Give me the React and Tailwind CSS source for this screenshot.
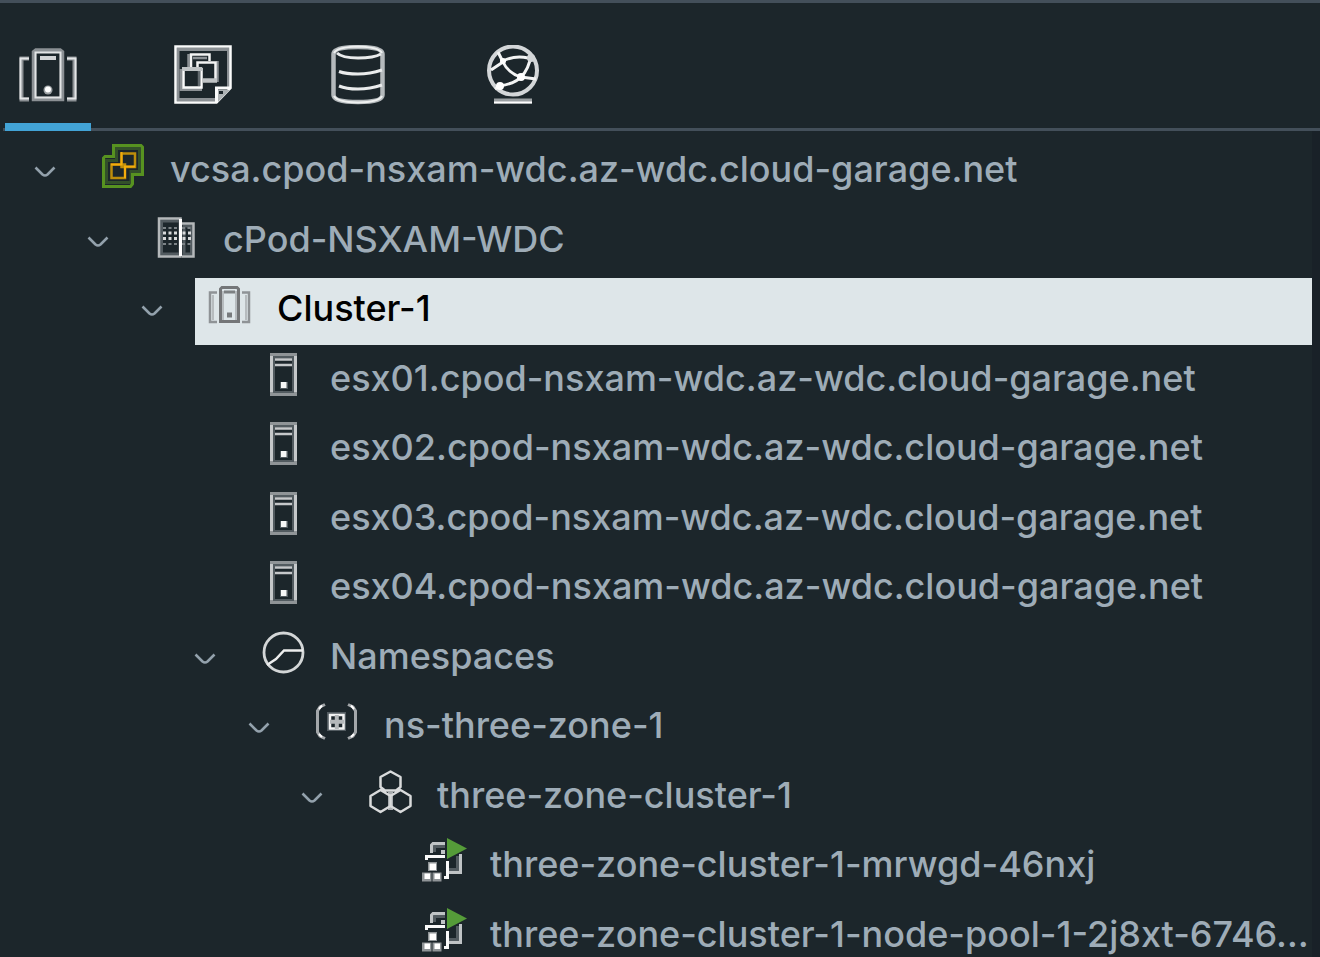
import React from 'react';

function ClusterTabIcon() {
  return (
    <svg className="size-[60px]" viewBox="0 0 60 60" fill="none" aria-hidden="true">
      <g stroke="#8b9094">
        <path d="M11 13.5H3.5V54.5H11M49 13.5H56.500V54.500H49" strokeWidth="4" />
        <path d="M16 7V54H44V7L42 5.500H18z" strokeWidth="4.500" />
      </g>
      <path d="M11 13.500H2.500V53.500H11M49 13.500H57.500V53.500H49" stroke="#e4e6e7" strokeWidth="2" />
      <path d="M17.500 7.500V52.500H42.500V7.500z" stroke="#e2e4e5" strokeWidth="2" />
      <path d="M22 13H38" stroke="#d2d4d6" strokeWidth="4" />
      <circle cx="30" cy="45" r="4.500" fill="#9da2a5" />
      <circle cx="30" cy="44.500" r="3" fill="#fff" />
    </svg>
  );
}

function VmTabIcon() {
  return (
    <svg className="size-[60px]" viewBox="0 0 60 60" fill="none" aria-hidden="true">
      <path d="M5 56V4.500H55.500V42M5 54.500H43" stroke="#8b9094" strokeWidth="3" />
      <path d="M2.500 1.500H57.500V43L43.500 57.500H2.500z" stroke="#fafbfb" strokeWidth="2.500" />
      <path d="M57 43H43.500V57" stroke="#fafbfb" strokeWidth="3" />
      <path d="M45 45H57L45 57z" fill="#aeb3b5" />
      <path d="M46 46H50V49H46z" fill="#1c262b" />
      <path d="M15.500 23V9M20 13H34M44.500 16V37" stroke="#8b9094" strokeWidth="2.500" />
      <path d="M18 24V9.500H36.500V16" stroke="#f3f4f4" strokeWidth="2.500" />
      <path d="M24.500 22V17.500H42.500V34" stroke="#f3f4f4" strokeWidth="2.500" fill="#1c262b" />
      <path d="M30 35.500H44" stroke="#bfc3c5" strokeWidth="4.500" />
      <path d="M8 24V44.500H29M27 26V41" stroke="#8b9094" strokeWidth="3" />
      <path d="M10.500 24H28.500V42.500H10.500z" stroke="#fafbfb" strokeWidth="2.500" fill="#1c262b" />
      <path d="M9 24H29" stroke="#bfc3c5" strokeWidth="4" />
      <path d="M26 26V41" stroke="#626a6f" strokeWidth="2.500" />
    </svg>
  );
}

function DatastoreTabIcon() {
  return (
    <svg className="size-[60px]" viewBox="0 0 60 60" fill="none" aria-hidden="true">
      <path d="M5.500 9V50Q5.500 57 30 57Q54.500 57 54.500 50V9Q54.500 2 30 2Q5.500 2 5.500 9z" stroke="#b4b9bc" strokeWidth="4.500" />
      <path d="M6 8Q9 2 30 1.500Q51 2 54 8M6 51Q9 57 30 57.500Q51 57 54 51" stroke="#eef0f0" strokeWidth="2" />
      <path d="M9 8Q14 13 30 13T53 9M11 26.500Q18 29 30 29T54 25M11 41Q18 44 30 44T54 40" stroke="#e9ebec" strokeWidth="3" />
    </svg>
  );
}

function NetworkTabIcon() {
  return (
    <svg className="size-[60px]" viewBox="0 0 60 60" fill="none" aria-hidden="true">
      <circle cx="30" cy="25.500" r="24" stroke="#d3d6d8" strokeWidth="4" />
      <path d="M11 56H49" stroke="#9a9fa2" strokeWidth="5" />
      <path d="M11 57.500H49" stroke="#fff" strokeWidth="2" />
      <path d="M15 7L20 17L8 25M20 16Q32 10 45 13M20 17Q25 28 38 32L53 34M38 32Q46 24 48 10M38 32Q33 38 17 41L12 44" stroke="#f3f4f4" strokeWidth="3" />
      <circle cx="20" cy="16" r="3" fill="#fff" />
      <circle cx="38" cy="32" r="4" fill="#fff" />
      <circle cx="17" cy="41" r="4" fill="#fff" />
      <circle cx="48" cy="13" r="4" fill="#d3d6d8" />
    </svg>
  );
}

const glyphs = {
  vcenter: (
    <>
      <path d="M15.500 4.500H38.500V27.500H30V38.500H5.500V16.500H15.500z" stroke="#33502a" strokeWidth="3" />
      <path d="M12.500 1.500H40L41.500 3V30.500H31.500V40L29.500 42.500H2.500V14L4 12.500H12.500z" stroke="#579220" strokeWidth="3" />
      <path d="M20.500 9.500H34V23H20.500zM10.500 20.500H24V34H10.500z" stroke="#bd8d0b" strokeWidth="2.500" />
      <path d="M20.500 8V20.500H10M24 34V22.500H34" stroke="#f4ac0c" strokeWidth="2" />
    </>
  ),
  datacenter: (
    <>
      <path d="M7.500 7H26V40H7.500zM30 12H37.500V40H30z" stroke="#525b60" strokeWidth="3" />
      <path d="M5 4.500H26.500V42.500H5zM28 9.500H39.500V42.500H28" stroke="#b4b8ba" strokeWidth="2.500" />
      <path d="M26.500 5V42" stroke="#fff" strokeWidth="3" />
      <path d="M9 14H23M28 14H37M9 30H23M28 30H37" stroke="#7c8387" strokeWidth="2" strokeDasharray="3 2.500" />
      <path d="M9 19H23M9 24.500H23M28.500 19H37M28.500 24.500H37" stroke="#d8dadb" strokeWidth="3" strokeDasharray="3 2.500" />
    </>
  ),
  cluster: (
    <>
      <path d="M9 9.500H2V39H9M34 9.500H41V39H34" stroke="#8f9396" strokeWidth="2.500" />
      <path d="M5 12V37M38 12V37M15 8V37M28 8V37" stroke="#b7bcbf" strokeWidth="2" />
      <path d="M12.500 6L14 4.500H29L30.500 6V38.500H12.500z" stroke="#747678" strokeWidth="3" />
      <path d="M16 9H27" stroke="#7d8183" strokeWidth="3" />
      <path d="M19 29.500H24V34.500H19z" fill="#777a7c" />
    </>
  ),
  host: (
    <>
      <path d="M12.500 3.500H32.500V39.500H12.500z" stroke="#525b60" strokeWidth="3" />
      <path d="M10.500 1.500H34.500V41.500H10.500z" stroke="#8f9497" strokeWidth="3" />
      <path d="M10.500 3V39M34.500 3V39" stroke="#c5c8ca" strokeWidth="3" />
      <path d="M14 6.500H31M14 12H31" stroke="#c5c8ca" strokeWidth="2.500" />
      <path d="M19 29H27V36H19z" fill="#525b60" />
      <path d="M20 29H25.500V35H20z" fill="#f6f7f7" />
    </>
  ),
  namespaces: (
    <>
      <circle cx="22.500" cy="21.500" r="19.500" stroke="#d3d6d7" strokeWidth="2.800" />
      <path d="M42 19.500H23L15 28L6 34" stroke="#eceded" strokeWidth="2.500" />
    </>
  ),
  namespace: (
    <>
      <path d="M10 4.500L5 7L2.500 11V32L5 36L10 38.500M33 4.500L38 7L40.500 11V32L38 36L33 38.500" stroke="#a3a7aa" strokeWidth="3" />
      <path d="M7 5.500L4 9M4 34L7 37M36 5.500L39 9M39 34L36 37" stroke="#fff" strokeWidth="2" />
      <path d="M12 12H31V31H12z" fill="#525b60" />
      <path d="M15 15H28.500V28.500H15z" fill="#1c262b" stroke="#f2f3f3" strokeWidth="2.500" />
      <path d="M21.800 15V29M15 21.800H29" stroke="#b4b8ba" strokeWidth="4" />
    </>
  ),
  kubernetes: (
    <>
      <path d="M22.500 22V40" stroke="#a9adb0" strokeWidth="5" />
      <path d="M22.500 1.500L32.500 7V17L28 20.500H17L12.500 17V7zM12.500 20L22.500 26V36L12.500 42L2.500 36V26zM32.500 20L42.500 26V36L32.500 42L22.500 36V26z" stroke="#d9dbdc" strokeWidth="2.500" strokeLinejoin="round" />
    </>
  ),
  vm: (
    <>
      <path d="M13.500 13V7.500H24M36.500 17V30.500H28" stroke="#525b60" strokeWidth="3" />
      <path d="M10.500 14V6L12 4.500H24M39.500 15V33.500H28" stroke="#bfc3c5" strokeWidth="3" />
      <path d="M20 11H24V15H20z" fill="#bfc3c5" />
      <path d="M5.500 21V17.500H24M26.500 22V38.500H23" stroke="#fafafa" strokeWidth="3" />
      <path d="M7 23H16V32H7zM1 33.500H10.500V42.500H1zM11.500 33.500H20.500V42.500H11.500z" fill="#8f9497" />
      <path d="M8.500 24.500H15V31H8.500zM3.500 34.500H9V40H3.500zM13.500 34.500H19V40H13.500z" fill="#fff" />
      <path d="M26 -1L46 9.500L26 20z" fill="#559c39" />
    </>
  ),
};

const indents = ['pl-[34px]', 'pl-[87px]', 'pl-[141px]', 'pl-[194px]', 'pl-[248px]', 'pl-[301px]', 'pl-[354px]'];

const nodes = [
  { level: 0, icon: 'vcenter', label: 'vcsa.cpod-nsxam-wdc.az-wdc.cloud-garage.net', open: true },
  { level: 1, icon: 'datacenter', label: 'cPod-NSXAM-WDC', open: true },
  { level: 2, icon: 'cluster', label: 'Cluster-1', open: true, selected: true },
  { level: 3, icon: 'host', label: 'esx01.cpod-nsxam-wdc.az-wdc.cloud-garage.net' },
  { level: 3, icon: 'host', label: 'esx02.cpod-nsxam-wdc.az-wdc.cloud-garage.net' },
  { level: 3, icon: 'host', label: 'esx03.cpod-nsxam-wdc.az-wdc.cloud-garage.net' },
  { level: 3, icon: 'host', label: 'esx04.cpod-nsxam-wdc.az-wdc.cloud-garage.net' },
  { level: 3, icon: 'namespaces', label: 'Namespaces', open: true },
  { level: 4, icon: 'namespace', label: 'ns-three-zone-1', open: true },
  { level: 5, icon: 'kubernetes', label: 'three-zone-cluster-1', open: true },
  { level: 6, icon: 'vm', label: 'three-zone-cluster-1-mrwgd-46nxj' },
  { level: 6, icon: 'vm', label: 'three-zone-cluster-1-node-pool-1-2j8xt-6746…' },
];

const tabs = [
  { name: 'Hosts and Clusters', Icon: ClusterTabIcon, active: true },
  { name: 'VMs and Templates', Icon: VmTabIcon },
  { name: 'Storage', Icon: DatastoreTabIcon },
  { name: 'Networking', Icon: NetworkTabIcon },
];

function TreeRow({ node }) {
  return (
    <li
      role="treeitem"
      aria-level={node.level + 1}
      aria-selected={Boolean(node.selected)}
      aria-expanded={node.open}
      className={`flex odd:mb-[3px] even:mb-[2px] ${indents[node.level]}`}
    >
      <span className="flex w-[54px] shrink-0 items-center pb-0.5">
        {node.open && (
          <button type="button" aria-label={`Collapse ${node.label}`}>
            <svg className="h-3 w-[22px]" viewBox="0 0 22 12" fill="none" aria-hidden="true">
              <path d="M1.500 1.500L8.500 8.500Q11 10.500 13.500 8.500L20.500 1.500" stroke="#93a1ac" strokeWidth="2.600" />
            </svg>
          </button>
        )}
      </span>
      <a
        href="#"
        className={`flex h-[67px] min-w-0 flex-1 items-start gap-[25px] pl-[13px] ${
          node.selected ? 'bg-[#dee6e9] text-black' : 'text-[#9eacb7]'
        }`}
      >
        <svg className="mt-[5px] size-[44px] shrink-0 overflow-visible" viewBox="0 0 44 44" fill="none" aria-hidden="true">
          {glyphs[node.icon]}
        </svg>
        <span className="whitespace-nowrap leading-[60px]">{node.label}</span>
      </a>
    </li>
  );
}

export default function App() {
  return (
    <main className="h-screen overflow-hidden border-t-[3px] border-[#434f5a] bg-[#1c262b] font-['Inter',sans-serif] text-[36px] font-medium">
      <div role="tablist" aria-label="Inventory" className="ml-[3px] flex gap-[69px] border-b-[3px] border-[#434f5a] pl-[2px]">
        {tabs.map(({ name, Icon, active }) => (
          <button
            key={name}
            type="button"
            role="tab"
            aria-label={name}
            aria-selected={Boolean(active)}
            className={`-mb-[3px] flex h-32 w-[86px] justify-center border-b-8 pt-[42px] ${
              active ? 'border-[#42a3d6]' : 'border-transparent'
            }`}
          >
            <Icon />
          </button>
        ))}
      </div>
      <div className="border-r-8 border-[#192128] pt-2">
        <ul role="tree" aria-label="Hosts and Clusters">
          {nodes.map((node) => (
            <TreeRow key={node.label} node={node} />
          ))}
        </ul>
      </div>
    </main>
  );
}
